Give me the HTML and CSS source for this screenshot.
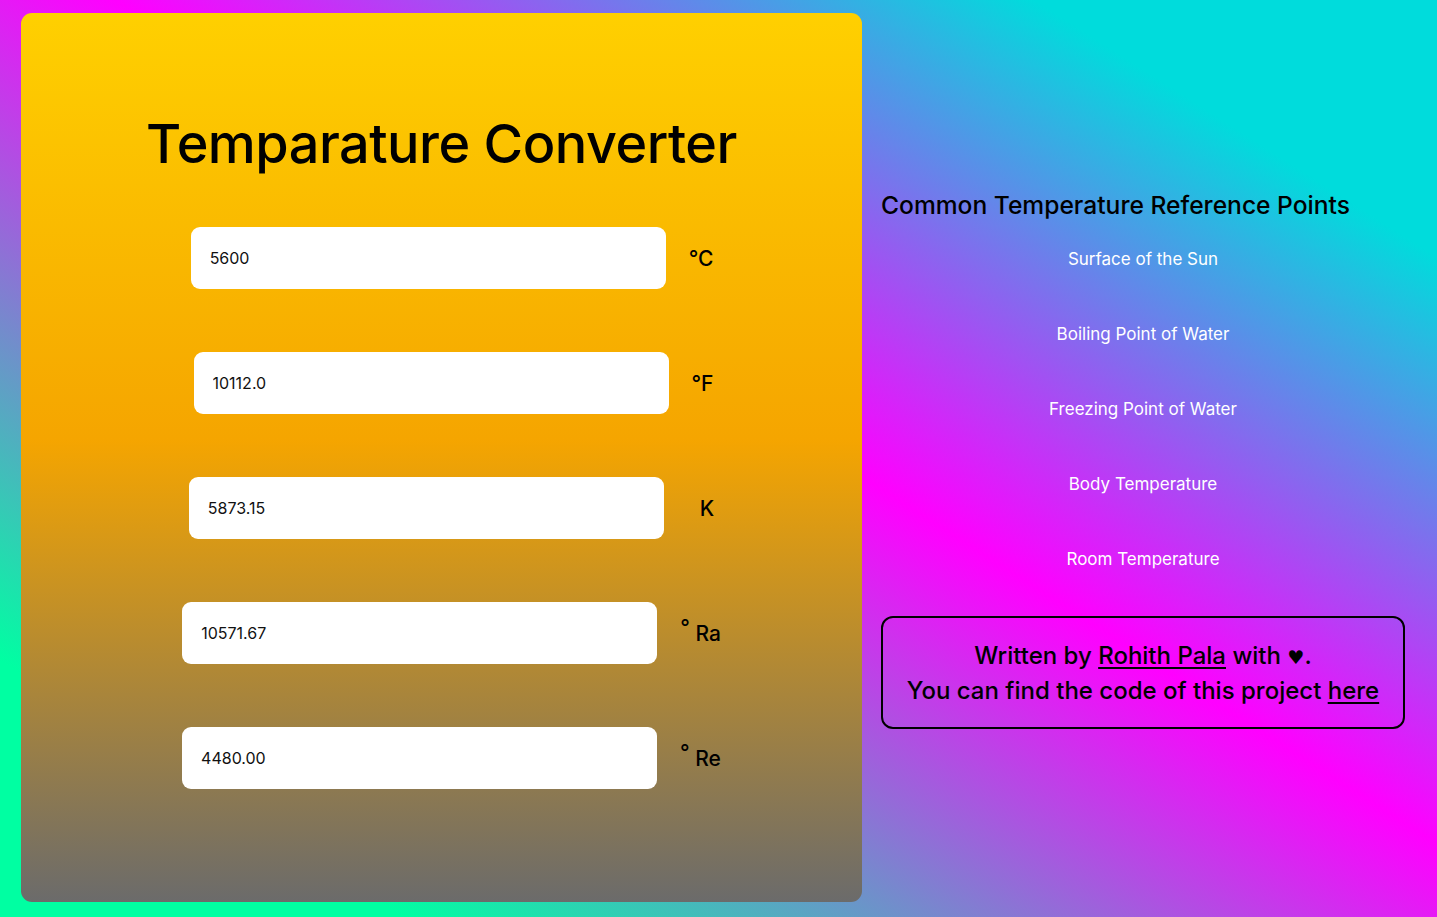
FILE: index.html
```html
<!DOCTYPE html>
<html lang="en">
<head>
<meta charset="utf-8">
<title>Temparature Converter</title>
<link rel="stylesheet" href="styles.css">
</head>
<body>
  <main class="card">
    <h1 class="title">Temparature Converter</h1>
    <div class="rows">
      <div class="row row-c">
        <input class="field" type="text" value="5600">
        <span class="unit">°C</span>
      </div>
      <div class="row row-f">
        <input class="field" type="text" value="10112.0">
        <span class="unit">°F</span>
      </div>
      <div class="row row-k">
        <input class="field" type="text" value="5873.15">
        <span class="unit unit-k">K</span>
      </div>
      <div class="row">
        <input class="field" type="text" value="10571.67">
        <span class="unit"><span class="deg">°</span> Ra</span>
      </div>
      <div class="row">
        <input class="field" type="text" value="4480.00">
        <span class="unit"><span class="deg">°</span> Re</span>
      </div>
    </div>
  </main>
  <aside class="side">
    <h2 class="side-title">Common Temperature Reference Points</h2>
    <ul class="refs">
      <li class="ref">Surface of the Sun</li>
      <li class="ref">Boiling Point of Water</li>
      <li class="ref">Freezing Point of Water</li>
      <li class="ref">Body Temperature</li>
      <li class="ref">Room Temperature</li>
    </ul>
    <div class="credits">
      <p class="credit-line">Written by <a class="link" href="#">Rohith Pala</a> with <span class="heart">♥</span>.</p>
      <p class="credit-line">You can find the code of this project <a class="link" href="#">here</a></p>
    </div>
  </aside>
</body>
</html>
```
FILE: styles.css
```css
* { box-sizing: border-box; }

html, body {
  margin: 0;
  height: 917px;
}

body {
  display: flex;
  align-items: center;
  gap: 19px;
  padding: 13px 32px 15px 21px;
  font-family: "Inter", "Noto Sans", sans-serif;
  color: #000;
  background: linear-gradient(to top right, #00ffa2 14%, #ff00ff 54%, #00dcdc 86%);
  overflow: hidden;
}

.card {
  width: 841px;
  height: 889px;
  flex: none;
  border-radius: 11px;
  background: linear-gradient(to bottom, #ffd000 0%, #f5a500 48%, #6b6b6b 100%);
  display: flex;
  flex-direction: column;
  align-items: center;
}

.title {
  margin: 99px 0 0;
  font-size: 54px;
  line-height: 64px;
  font-weight: 500;
  letter-spacing: -0.5px;
}

.rows {
  display: flex;
  flex-direction: column;
  gap: 63px;
  margin-top: 51px;
  padding-left: 20px;
  align-items: center;
}

.row {
  display: flex;
  align-items: center;
}

.row-c { padding-left: 1px; }
.row-f { padding-left: 4px; }

.field {
  width: 475px;
  height: 62px;
  border: none;
  outline: none;
  border-radius: 9px;
  background: #fff;
  padding: 0 19px;
  font-family: "Inter", "Noto Sans", sans-serif;
  font-size: 16px;
  color: #111;
}

.unit {
  margin-left: 23px;
  font-size: 21px;
  font-weight: 500;
  line-height: 1;
  white-space: pre;
}

.unit-k { padding-left: 13px; }

.deg {
  position: relative;
  top: -6px;
}

.side {
  width: 524px;
  flex: none;
  display: flex;
  flex-direction: column;
  padding-top: 4px;
}

.side-title {
  margin: 0;
  font-size: 24.6px;
  line-height: 30px;
  font-weight: 500;
}

.refs {
  list-style: none;
  margin: 28px 0 0;
  padding: 0;
  display: flex;
  flex-direction: column;
  gap: 53px;
}

.ref {
  text-align: center;
  color: #fff;
  font-size: 17px;
  line-height: 22px;
}

.credits {
  margin-top: 46px;
  border: 2px solid #000;
  border-radius: 12px;
  padding: 21px 10px 19px;
  text-align: center;
}

.credit-line {
  margin: 0;
  font-size: 24px;
  line-height: 34px;
  font-weight: 500;
}

.heart {
  font-family: "DejaVu Sans", sans-serif;
  font-size: 19px;
}

.link {
  color: #000;
  text-decoration: underline;
  text-underline-offset: 3px;
  text-decoration-thickness: 2px;
}
```
